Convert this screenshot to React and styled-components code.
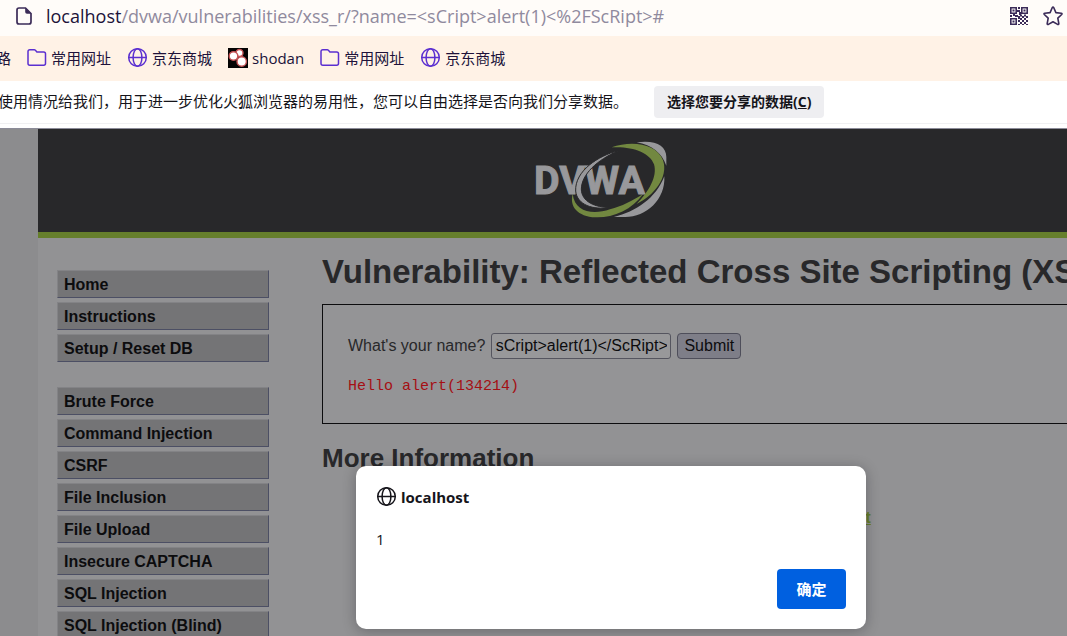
import React, { useEffect, useRef } from "react";
import styled, { createGlobalStyle } from "styled-components";

const GlobalStyle = createGlobalStyle`
  * { box-sizing: border-box; }
  body { margin: 0; overflow: hidden; }
  button, input { font: inherit; margin: 0; }
`;

const uiFont = `"Open Sans", "Noto Sans CJK SC", sans-serif`;
const pageFont = `"Liberation Sans", Arial, sans-serif`;

const Browser = styled.div`
  display: flex;
  flex-direction: column;
  height: 100vh;
  overflow: hidden;
  background: #fff;
  font-family: ${uiFont};
  color: #15141a;
`;

const AddressBar = styled.header`
  display: flex;
  align-items: center;
  flex: none;
  height: 36px;
  padding: 0 4px 4px 15px;
  background: #fffcf9;
  color: #3b2b58;
`;

const Address = styled.div`
  flex: 1;
  margin-left: 13px;
  font-size: 18px;
  line-height: 24px;
  white-space: nowrap;
  color: #908a9e;
`;

const Host = styled.span`
  color: #20123a;
`;

const IconButton = styled.button`
  display: flex;
  margin-left: 14px;
  padding: 0;
  border: 0;
  background: none;
  color: inherit;
`;

const BookmarksBar = styled.nav`
  display: flex;
  align-items: center;
  gap: 16px;
  flex: none;
  height: 45px;
  padding-bottom: 2px;
  background: #fff2e6;
  font-size: 15px;
  line-height: 20px;
  white-space: nowrap;
`;

const Bookmark = styled.a`
  display: flex;
  align-items: center;
  gap: 4px;
  color: #20123a;
  text-decoration: none;

  svg { color: #5b2fd0; }
`;

const CutBookmark = styled(Bookmark)`
  width: 11px;
  justify-content: flex-end;
`;

const Notice = styled.section`
  display: flex;
  align-items: center;
  gap: 26px;
  flex: none;
  height: 43px;
  border-bottom: 1px solid #f0f0f2;
  font-size: 15px;
  white-space: nowrap;
`;

const NoticeText = styled.p`
  margin: 0 0 0 -2px;
  padding-bottom: 2px;
  line-height: 20px;
`;

const NoticeButton = styled.button`
  height: 32px;
  padding: 0 13px 2px;
  border: 0;
  border-radius: 4px;
  background: #eeeef1;
  color: #15141a;
  font-size: 14px;
  font-weight: 700;
`;

const Viewport = styled.main`
  position: relative;
  flex: 1;
  min-height: 0;
  margin-top: 4px;
  padding-left: 38px;
  overflow: hidden;
  border-top: 1px solid #8b8b98;
  background: #8c8c8e;
  font-family: ${pageFont};
`;

const Site = styled.div`
  min-height: 100%;
  background: #929294;
`;

const Banner = styled.div`
  display: flex;
  justify-content: center;
  height: 109px;
  padding: 6px 0 0 100px;
  border-bottom: 6px solid #667f2c;
  background: #28282a;
`;

const Columns = styled.div`
  display: flex;
  gap: 53px;
  padding-left: 19px;
`;

const Menu = styled.nav`
  display: flex;
  flex: none;
  flex-direction: column;
  gap: 25px;
  width: 212px;
  padding-top: 32px;
`;

const MenuGroup = styled.ul`
  display: flex;
  flex-direction: column;
  gap: 4px;
  margin: 0;
  padding: 0;
  list-style: none;
`;

const MenuLink = styled.a`
  display: block;
  height: 28px;
  padding-left: 6px;
  border: 1px solid;
  border-color: #838386 #4c4f64 #4c4f64 #838386;
  background: #747476;
  color: #0c0c0e;
  font-size: 16px;
  font-weight: 700;
  line-height: 27px;
  text-decoration: none;
`;

const Content = styled.article`
  flex: 1;
  min-width: 0;
  overflow: hidden;
  color: #28282a;
`;

const Title = styled.h1`
  margin: 14px 0 12px;
  font-size: 33px;
  line-height: 40px;
  white-space: nowrap;
`;

const Panel = styled.div`
  height: 120px;
  padding: 28px 25px;
  border: 1px solid #0c0c0e;
  border-right: 0;
  background: #949496;
`;

const NameForm = styled.form`
  display: flex;
  align-items: center;
  gap: 6px;
  font-size: 16px;
`;

const NameInput = styled.input`
  width: 180px;
  height: 26px;
  padding: 0 3px;
  border: 1px solid #55555f;
  border-radius: 3px;
  background: #98989a;
  color: #0c0c0e;
`;

const SubmitButton = styled.button`
  width: 64px;
  height: 26px;
  padding: 0;
  border: 1px solid #4e4e5a;
  border-radius: 4px;
  background: #7e7e88;
  color: #0c0c0e;
`;

const Greeting = styled.pre`
  margin: 18px 0 0;
  font-family: "Liberation Mono", monospace;
  font-size: 15px;
  line-height: 20px;
  color: #a50f14;
`;

const Subtitle = styled.h2`
  margin: 18px 0 0;
  font-size: 26px;
  line-height: 32px;
`;

const References = styled.ul`
  margin: 34px 0 0;
  padding: 0 0 0 58px;
  list-style: none;
`;

const Reference = styled.a`
  color: #667f2c;
  font-size: 16px;
  font-weight: 700;
  line-height: 20px;
  white-space: nowrap;
`;

const DialogLayer = styled.div`
  position: absolute;
  inset: 0;
  display: flex;
  align-items: flex-end;
  justify-content: center;
  padding: 0 0 7px 155px;
`;

const Dialog = styled.section`
  display: flex;
  flex-direction: column;
  width: 510px;
  padding: 20px;
  border-radius: 10px;
  background: #fff;
  box-shadow: 0 2px 14px rgba(12, 12, 20, 0.3);
  color: #15141a;
  font-family: ${uiFont};
  font-size: 15px;
`;

const DialogTitle = styled.h2`
  display: flex;
  align-items: center;
  gap: 4px;
  margin: 0;
  font-size: 15px;
  line-height: 20px;
`;

const DialogMessage = styled.p`
  margin: 22px 0 19px;
  line-height: 21px;
`;

const ConfirmButton = styled.button`
  align-self: flex-end;
  width: 69px;
  height: 40px;
  padding: 0 0 2px;
  border: 0;
  border-radius: 4px;
  background: #0060e0;
  color: #fff;
  font-weight: 700;
`;

const GlobeIcon = () => (
  <svg width="21" height="21" viewBox="0 0 21 21" fill="none" stroke="currentColor" strokeWidth="1.5" aria-hidden="true">
    <circle cx="10.5" cy="10.5" r="8.8" />
    <ellipse cx="10.5" cy="10.5" rx="4.4" ry="8.8" />
    <path d="M1.7 10.5h17.6" />
  </svg>
);

const FolderIcon = () => (
  <svg width="20" height="20" viewBox="0 0 20 20" fill="none" stroke="currentColor" strokeWidth="1.5" strokeLinejoin="round" aria-hidden="true">
    <path d="M1 15.5v-12Q1 1.8 2.8 1.8h4.4q.7 0 1.200.5l1.500 1.600h6.800Q18.500 3.900 18.500 5.700v9.800q0 1.700-1.800 1.700H2.800Q1 17.200 1 15.500z" />
  </svg>
);

const FileIcon = () => (
  <svg width="18" height="20" viewBox="0 0 18 20" aria-hidden="true">
    <path d="M4 2h6.500L16 7.500V16q0 2-2 2H4q-2 0-2-2V4q0-2 2-2z" fill="none" stroke="currentColor" strokeWidth="1.700" />
    <path d="M10.200 2v4q0 1.800 1.800 1.800h4.200z" fill="currentColor" />
  </svg>
);

const QrIcon = () => (
  <svg width="20" height="20" viewBox="0 0 20 20" fill="currentColor" aria-hidden="true">
    <g fill="none" stroke="currentColor" strokeWidth="1.600">
      <path d="M1.800 1.800h5.400v5.400H1.800zM12.800 1.800h5.400v5.400h-5.400zM1.800 12.800h5.400v5.400H1.800z" />
    </g>
    <path d="M3.500 3.500h2v2h-2zM14.500 3.500h2v2h-2zM3.500 14.500h2v2h-2zM9 1h2v2H9zM8 4h3v2H8zM10 6h2v3h-2zM1 9h2v2H1zM4 8h2v2H4zM6 9h3v2H6zM9 10h2v3H9zM11 8.500h2v2h-2zM13 10h2v2h-2zM15 8.500h2v2h-2zM17 10h2v2h-2zM11 12h2v2h-2zM15 12h2v2h-2zM13 14h2v2h-2zM9 14h2v2H9zM17 14h2v2h-2zM11 16h2v2h-2zM15 16h2v2h-2zM9 18h2v1H9zM13 18h2v1h-2zM17 18h2v1h-2z" />
  </svg>
);

const StarIcon = () => (
  <svg width="20" height="20" viewBox="0 0 20 20" fill="none" stroke="currentColor" strokeWidth="1.600" strokeLinejoin="round" aria-hidden="true">
    <path d="M9.200 1.700q.8-1.200 1.600 0l2.100 4.900 5.300.6q1.400.3.500 1.300l-3.900 3.700 1 5.300q.1 1.400-1.200.9L10 15.700l-4.600 2.700q-1.300.5-1.200-.9l1-5.300-3.900-3.700q-.9-1 .5-1.300l5.300-.6z" />
  </svg>
);

const ShodanIcon = () => (
  <svg width="20" height="20" viewBox="0 0 20 20" aria-hidden="true">
    <rect width="20" height="20" fill="#050303" />
    <g fill="#fff" stroke="#c65356" strokeWidth="1.400">
      <circle cx="11.500" cy="5" r="3.500" />
      <circle cx="5.500" cy="8" r="4.300" />
      <circle cx="13.700" cy="13.500" r="4.700" />
    </g>
  </svg>
);

const Logo = () => (
  <svg width="145" height="90" viewBox="0 0 435 270" role="img" aria-label="DVWA logo">
    <g fill="#98989b">
      <path d="M320 22C376 14 409 32 409 66V92C396 55 366 29 320 22z" />
      <path d="M403 124C407 196 346 248 282 246H252C317 230 378 190 403 124z" />
    </g>
    <path d="M128 176C134 232 189 240 240 223C276 213 306 198 340 176C306 225 247 249 197 247C142 244 118 215 128 176z" fill="#728840" />
    <text x="12" y="177" fill="#98989b" stroke="#98989b" strokeWidth="3" fontFamily="Roboto, sans-serif" fontWeight="700" fontSize="118">
      DVWA
    </text>
    <path d="M265 47C205 62 134 108 137 168C141 210 190 226 240 217C196 218 154 200 154 162C155 118 200 76 265 47z" fill="#98989b" stroke="#28282a" strokeWidth="3" />
    <path d="M245 37C302 16 380 24 399 76C417 128 369 184 320 207C356 170 383 125 372 88C360 53 307 33 245 37z" fill="#728840" />
  </svg>
);

const setupItems = ["Home", "Instructions", "Setup / Reset DB"];
const attackItems = [
  "Brute Force",
  "Command Injection",
  "CSRF",
  "File Inclusion",
  "File Upload",
  "Insecure CAPTCHA",
  "SQL Injection",
  "SQL Injection (Blind)",
];

const bookmarks = [
  { label: "常用网址", Icon: FolderIcon },
  { label: "京东商城", Icon: GlobeIcon },
  { label: "shodan", Icon: ShodanIcon },
  { label: "常用网址", Icon: FolderIcon },
  { label: "京东商城", Icon: GlobeIcon },
];

function MenuSection({ items }) {
  return (
    <MenuGroup>
      {items.map((item) => (
        <li key={item}>
          <MenuLink href="#">{item}</MenuLink>
        </li>
      ))}
    </MenuGroup>
  );
}

export default function App() {
  const nameRef = useRef(null);

  // Keep the end of the long value in view.
  useEffect(() => {
    nameRef.current.scrollLeft = nameRef.current.scrollWidth;
  }, []);

  return (
    <Browser>
      <GlobalStyle />
      <AddressBar>
        <FileIcon />
        <Address>
          <Host>localhost</Host>
          {"/dvwa/vulnerabilities/xss_r/?name=<sCript>alert(1)<%2FScRipt>#"}
        </Address>
        <IconButton aria-label="QR code"><QrIcon /></IconButton>
        <IconButton aria-label="Bookmark this page"><StarIcon /></IconButton>
      </AddressBar>

      <BookmarksBar>
        <CutBookmark href="#">路</CutBookmark>
        {bookmarks.map(({ label, Icon }, i) => (
          <Bookmark href="#" key={i}>
            <Icon />
            {label}
          </Bookmark>
        ))}
      </BookmarksBar>

      <Notice>
        <NoticeText>使用情况给我们，用于进一步优化火狐浏览器的易用性，您可以自由选择是否向我们分享数据。</NoticeText>
        <NoticeButton>选择您要分享的数据(<u>C</u>)</NoticeButton>
      </Notice>

      <Viewport>
        <Site>
          <Banner><Logo /></Banner>
          <Columns>
            <Menu>
              <MenuSection items={setupItems} />
              <MenuSection items={attackItems} />
            </Menu>
            <Content>
              <Title>Vulnerability: Reflected Cross Site Scripting (XSS)</Title>
              <Panel>
                <NameForm onSubmit={(e) => e.preventDefault()}>
                  <label htmlFor="name">What's your name?</label>
                  <NameInput id="name" ref={nameRef} defaultValue="<sCript>alert(1)</ScRipt>" />
                  <SubmitButton type="submit">Submit</SubmitButton>
                </NameForm>
                <Greeting>Hello alert(134214)</Greeting>
              </Panel>
              <Subtitle>More Information</Subtitle>
              <References>
                <li>
                  <Reference href="#">https://owasp.org/www-community/xss-filter-evasion-cheatsheet</Reference>
                </li>
              </References>
            </Content>
          </Columns>
        </Site>
        <DialogLayer>
          <Dialog role="dialog" aria-labelledby="dialog-title">
            <DialogTitle id="dialog-title"><GlobeIcon />localhost</DialogTitle>
            <DialogMessage>1</DialogMessage>
            <ConfirmButton>确定</ConfirmButton>
          </Dialog>
        </DialogLayer>
      </Viewport>
    </Browser>
  );
}
